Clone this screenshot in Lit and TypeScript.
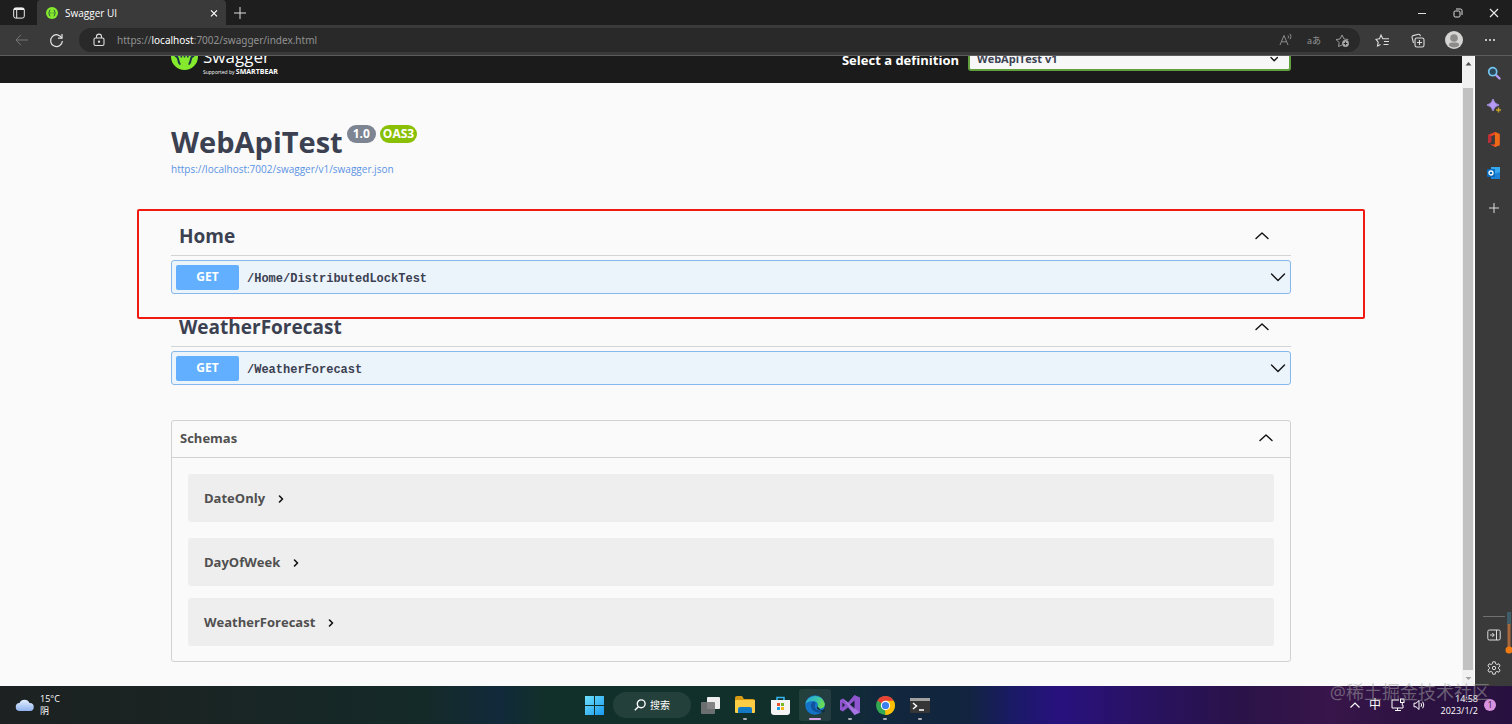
import { LitElement, html, css, svg } from "lit";
import { customElement, property } from "lit/decorators.js";

const chevron = (d: string, w = 1.4) => svg`<path d=${d} fill="none" stroke="#111" stroke-width=${w} stroke-linecap="round" stroke-linejoin="round"/>`;
const UP = "M2 9.500 L8 4 L14 9.500";
const DOWN = "M1.5 5 L8 11.5 L14.5 5";

const resets = css`
  * { box-sizing: border-box; }
  button, input, select { font: inherit; color: inherit; margin: 0; padding: 0; border: 0; background: none; }
  button { display: flex; align-items: center; justify-content: center; }
  h1, h2, h3, p { margin: 0; }
  svg { display: block; flex: none; }
`;

@customElement("browser-chrome")
export class BrowserChrome extends LitElement {
  static styles = [resets, css`
    :host { display: block; color: #e8e8e8; font-size: 10px; }
    .tabs { display: flex; height: 25px; background: #1e1e1e; }
    .workspace { width: 37px; }
    .tab { display: flex; align-items: center; width: 189px; padding: 0 6px 0 9px; background: #3a3a3a; border-radius: 4px 4px 0 0; color: #fff; }
    .tab span { flex: 1; margin-left: 7px; }
    .plus { width: 28px; }
    .window { display: flex; margin-left: auto; }
    .window button { width: 36px; }
    .tools { display: flex; align-items: center; height: 31px; background: #3a3a3a; border-bottom: 1px solid #5c5c5c; padding-right: 4px; }
    .nav { width: 35px; height: 30px; }
    .nav.back { margin-left: 4px; }
    .address { display: flex; flex: 1; align-items: center; height: 24px; margin: 0 4px 0 5px; padding: 0 4px 0 14px; border-radius: 12px; background: #292929; }
    .url { flex: 1; margin-left: 12px; font-family: "Noto Sans", sans-serif; font-size: 10px; line-height: 14px; color: #929292; text-decoration: none; }
    .url b { font-weight: 400; color: #fff; }
    .address button { width: 28px; height: 24px; color: #999; font-size: 9px; }
    .tools > .side { width: 36px; height: 30px; }
  `];
  render() {
    return html`
      <div class="tabs">
        <button class="workspace" aria-label="Workspaces"><svg width="12" height="12" viewBox="0 0 12 12" fill="none" stroke="#eee" stroke-width="1"><rect x=".7" y=".9" width="10.6" height="10.2" rx="2"/><path d="M1 2h10" stroke-width="2"/><path d="M3.7 3v8"/></svg></button>
        <div class="tab">
          <svg width="12" height="12" viewBox="0 0 12 12"><circle cx="6" cy="6" r="6" fill="#85ea2d"/><path d="M4.3 3C3 3 3.8 5.5 2.5 6 3.800 6.500 3 9 4.300 9M7.700 3C9 3 8.200 5.500 9.500 6 8.200 6.500 9 9 7.700 9M4.500 6h.8M6.700 6h.8" fill="none" stroke="#173647" stroke-width=".9"/></svg>
          <span>Swagger UI</span>
          <button aria-label="Close tab"><svg width="12" height="12" viewBox="0 0 12 12"><path d="M3 3.300l6 6M9 3.300l-6 6" stroke="#fff" stroke-width="1.200"/></svg></button>
        </div>
        <button class="plus" aria-label="New tab"><svg width="12" height="12" viewBox="0 0 12 12"><path d="M6 0v12M0 6h12" stroke="#ddd"/></svg></button>
        <div class="window">
          <button aria-label="Minimize"><svg width="10" height="10" viewBox="0 0 10 10"><path d="M1 5.500h8" stroke="#ddd"/></svg></button>
          <button aria-label="Restore"><svg width="10" height="10" viewBox="0 0 10 10" fill="none" stroke="#ddd"><rect x="1" y="3" width="6" height="6" rx="1.200"/><path d="M3 1h4.500q1.500 0 1.500 1.500V7"/></svg></button>
          <button aria-label="Close"><svg width="10" height="10" viewBox="0 0 10 10"><path d="M1 1l8 8M9 1l-8 8" stroke="#eee" stroke-width="1.100"/></svg></button>
        </div>
      </div>
      <div class="tools">
        <button class="nav back" aria-label="Back"><svg width="14" height="12" viewBox="0 0 14 12" fill="none" stroke="#777"><path d="M13 6H1M6 .8L1 6l5 5.200"/></svg></button>
        <button class="nav" aria-label="Refresh"><svg width="15" height="15" viewBox="0 0 15 15" fill="none" stroke="#e6e6e6" stroke-width="1.200"><path d="M12.800 5A5.900 5.900 0 1 0 13.400 8"/><path d="M13 1v4.200H9"/></svg></button>
        <div class="address">
          <svg width="12" height="14" viewBox="0 0 12 14" fill="none" stroke="#ddd" stroke-width="1.100"><rect x="1" y="5" width="10" height="7.500" rx="1.500"/><path d="M3.500 5V3.600a2.500 2.500 0 0 1 5 0V5"/><circle cx="6" cy="8.700" r=".6" fill="#ddd"/></svg>
          <a class="url" href="#">https://<b>localhost</b>:7002/swagger/index.html</a>
          <button aria-label="Read aloud"><svg width="14" height="14" viewBox="0 0 14 14" fill="none" stroke="#8d8d8d"><path d="M1 12L5 2.500 9 12M2.500 8.800h5M9 2.500q1.200 1.200 0 2.800M11 .8q2 2.600 0 5.400"/></svg></button>
          <button aria-label="Translate">aあ</button>
          <button aria-label="Add favourite"><svg width="15" height="15" viewBox="0 0 15 15" fill="none" stroke="#999"><path d="M7 12l-3.500 1.500.7-4L1 6.500l4-.5L7 2l2 4 4 .5-1 1"/><circle cx="10.500" cy="10.500" r="3.400" fill="#aaa" stroke="none"/><path d="M8.700 10.500h3.600M10.500 8.700v3.600" stroke="#292929"/></svg></button>
        </div>
        <button class="side" aria-label="Favourites"><svg width="15" height="15" viewBox="0 0 15 15" fill="none" stroke="#ddd" stroke-width="1.100"><path d="M5.500 11.500L2.500 13l.7-3.800L1 6.300l3.500-.6L6 2l1.800 3.700H14M9 8.500h5M8.500 11.500h5"/></svg></button>
        <button class="side" aria-label="Collections"><svg width="15" height="15" viewBox="0 0 15 15" fill="none" stroke="#ddd" stroke-width="1.100"><rect x="4" y="5" width="9" height="9" rx="1.800"/><path d="M8.500 7v5M6 9.500h5M2.500 10L1 4.500Q.8 3 2 2.600L7.500 1.200q1.500-.2 2 2"/></svg></button>
        <button class="side" aria-label="Profile"><svg width="18" height="18" viewBox="0 0 18 18"><circle cx="9" cy="9" r="9" fill="#d6d4d2"/><circle cx="9" cy="7" r="3.800" fill="#8d8b8a"/><path d="M3.800 14.500q0-3 3-3h4.400q3 0 3 3a8 8 0 0 1-10.400 0z" fill="#8d8b8a"/></svg></button>
        <button class="side" aria-label="Settings and more"><svg width="12" height="4" viewBox="0 0 12 4" fill="#eee"><circle cx="2" cy="2" r="1"/><circle cx="6" cy="2" r="1"/><circle cx="10" cy="2" r="1"/></svg></button>
      </div>`;
  }
}

@customElement("api-section")
export class ApiSection extends LitElement {
  @property() name = "";
  @property() path = "";
  @property({ type: Boolean }) marked = false;
  static styles = [resets, css`
    :host { display: block; position: relative; height: 91px; color: #3b4151; }
    .tag { display: flex; align-items: center; width: 100%; height: 41px; padding: 0 21px 0 8px; border-bottom: 1px solid #d3d4d6; justify-content: space-between; }
    h2 { font-size: 19px; line-height: 26px; padding-top: 2px; font-weight: 700; }
    .op { display: flex; align-items: center; width: 100%; height: 34px; margin-top: 4px; padding: 0 4px; border: 1px solid #85b8ec; border-radius: 3px; background: #ebf3fb; }
    .method { width: 63px; margin-right: 8px; border-radius: 2px; background: #61affe; color: #fff; font-size: 12px; line-height: 24px; padding-bottom: 1px; font-weight: 700; }
    .path { flex: 1; text-align: left; padding-top: 4px; font: 700 12px/16px "Liberation Mono", monospace; }
    .mark { position: absolute; inset: -6px -74px -13px -34px; border: 2px solid #f01a12; border-radius: 2px; pointer-events: none; z-index: 2; }
  `];
  render() {
    return html`
      <button class="tag"><h2>${this.name}</h2><svg width="16" height="13" viewBox="0 0 16 13">${chevron(UP)}</svg></button>
      <button class="op"><span class="method">GET</span><span class="path">${this.path}</span><svg width="16" height="16" viewBox="0 0 16 16">${chevron(DOWN)}</svg></button>
      ${this.marked ? html`<div class="mark"></div>` : ""}`;
  }
}

@customElement("swagger-page")
export class SwaggerPage extends LitElement {
  static styles = [resets, css`
    :host { display: flex; flex: 1; min-width: 0; overflow: hidden; background: #fafafa; color: #3b4151; }
    .page { flex: 1; min-width: 0; }
    .wrap { max-width: 1120px; margin: 0 auto; }
    .topbar { height: 46px; margin-top: -19px; background: #1b1b1b; color: #fff; }
    .topbar .wrap { display: flex; align-items: flex-start; height: 100%; }
    .logo { display: flex; gap: 5px; margin-top: 6px; }
    .brand { display: flex; flex-direction: column; padding-top: 3px; }
    .word { font-size: 17px; line-height: 22px; }
    .by { font-size: 5px; line-height: 7px; }
    .by b { font-size: 7px; }
    .def { display: flex; align-items: flex-start; margin-left: auto; margin-top: 10px; gap: 9px; font-size: 13px; font-weight: 700; }
    .def label { line-height: 24px; padding-top: 1px; }
    .pick { display: flex; align-items: center; position: relative; }
    select { appearance: none; width: 323px; height: 24px; padding: 0 7px 2px; border: 2px solid #62a03f; border-radius: 3px; background: #f7f7f7; color: #3b4151; font-size: 11px; }
    .pick svg { position: absolute; right: 12px; top: 8px; }
    .info { padding: 38px 0 39px; }
    .title { display: flex; align-items: flex-start; gap: 4px; }
    h1 { font-size: 29px; line-height: 41px; font-weight: 700; }
    .pill { margin-top: 4px; padding: 0 6px; border-radius: 9px; background: #7d8492; color: #fff; font-size: 12px; line-height: 18px; font-weight: 700; }
    .oas { background: #89bf04; padding: 0 3px; }
    .json { display: block; color: #5a93e4; font-size: 10px; line-height: 14px; text-decoration: none; }
    .models { margin-top: 23px; border: 1px solid #d0d1d3; border-radius: 3px; color: #505050; padding-bottom: 15px; }
    .head { display: flex; justify-content: space-between; width: 100%; height: 37px; padding: 0 16px 3px 8px; border-bottom: 1px solid #d0d1d3; }
    h3 { font-size: 13px; line-height: 18px; font-weight: 700; }
    .model { display: flex; align-items: center; height: 48px; margin: 16px 16px 0; padding-left: 16px; gap: 12px; background: #eeeeee; border-radius: 3px; font-size: 13px; font-weight: 700; }
    .model:last-child { margin-top: 12px; }
    .scroll { display: flex; flex-direction: column; align-items: center; width: 13px; background: #f1f1f1; border-right: 1px solid #fff; }
    .arrow { height: 16px; width: 13px; }
    .track { flex: 1; width: 10px; padding-top: 16px; display: flex; }
    .thumb { flex: 1; background: #c1c1c1; }
  `];
  render() {
    return html`
      <main class="page">
        <div class="topbar"><div class="wrap">
          <div class="logo">
            <svg width="27" height="27" viewBox="0 0 27 27"><circle cx="13.500" cy="13.500" r="13.500" fill="#85ea2d"/><path d="M9.500 6C6.500 6 8.500 12 5.500 13.500 8.500 15 6.500 21 9.500 21M17.500 6C20.500 6 18.500 12 21.500 13.500 18.500 15 20.500 21 17.500 21" fill="none" stroke="#173647" stroke-width="2"/><path d="M9.500 13.500h1.600M12.700 13.500h1.600M16 13.500h1.600" stroke="#173647" stroke-width="2"/></svg>
            <div class="brand"><span class="word">Swagger</span><span class="by">Supported by <b>SMARTBEAR</b></span></div>
          </div>
          <div class="def"><label for="definition">Select a definition</label>
            <div class="pick"><select id="definition"><option>WebApiTest v1</option></select><svg width="10" height="8" viewBox="0 0 10 8">${chevron("M2 2.500l3.200 3.200L8.400 2.500")}</svg></div>
          </div>
        </div></div>
        <div class="wrap">
          <div class="info">
            <div class="title"><h1>WebApiTest</h1><span class="pill">1.0</span><span class="pill oas">OAS3</span></div>
            <a class="json" href="#">https://localhost:7002/swagger/v1/swagger.json</a>
          </div>
          <api-section name="Home" path="/Home/DistributedLockTest" marked></api-section>
          <api-section name="WeatherForecast" path="/WeatherForecast"></api-section>
          <section class="models">
            <button class="head"><h3>Schemas</h3><svg width="16" height="13" viewBox="0 0 16 13">${chevron(UP)}</svg></button>
            ${["DateOnly", "DayOfWeek", "WeatherForecast"].map(n => html`<div class="model">${n}<svg width="8" height="10" viewBox="0 0 8 10">${chevron("M2.500 3L5.500 6 2.500 9", 1.6)}</svg></div>`)}
          </section>
        </div>
      </main>
      <div class="scroll">
        <svg class="arrow" viewBox="0 0 13 16"><path d="M3.500 9.500L6.500 6l3 3.500z" fill="#505050"/></svg>
        <div class="track"><div class="thumb"></div></div>
        <svg class="arrow" viewBox="0 0 13 16"><path d="M3.500 7L6.500 10l3-3z" fill="#a0a0a0"/></svg>
      </div>`;
  }
}

@customElement("edge-sidebar")
export class EdgeSidebar extends LitElement {
  static styles = [resets, css`
    :host { display: flex; flex-direction: column; align-items: center; position: relative; width: 37px; padding: 10px 0 11px; background: #3a3a3a; }
    .top { display: flex; flex-direction: column; gap: 19px; }
    .plus { margin-top: 23px; }
    .bottom { display: flex; flex-direction: column; align-items: center; gap: 19px; margin-top: auto; padding-top: 11px; border-top: 1px solid #707070; width: 22px; }
    .gauge { position: absolute; right: 0; bottom: 32px; }
  `];
  render() {
    return html`
      <div class="top">
        <button aria-label="Search"><svg width="14" height="14" viewBox="0 0 14 14"><path d="M8.500 8.500l4 4" stroke="#b69af0" stroke-width="2.400" stroke-linecap="round"/><circle cx="5.700" cy="5.700" r="4" fill="#2c4858" stroke="#72c4ef" stroke-width="1.700"/></svg></button>
        <button aria-label="Discover"><svg width="14" height="14" viewBox="0 0 14 14"><path d="M6 0q1 5 6 6-5 1-6 6-1-5-6-6 5-1 6-6z" fill="#b59bf5" stroke="#b59bf5" stroke-width=".8"/><path d="M11.500 8.500v5M9 11h5" stroke="#c6a229" stroke-width="1.400"/></svg></button>
        <button aria-label="Office"><svg width="14" height="15" viewBox="0 0 14 16"><path d="M8 0L1 3v9l3-1.500V4.500L8 3v10l-5 .2L8 16l5-2V2z" fill="#e94425"/><path d="M8 0l5 2v12l-5 2z" fill="#ef6a17"/><path d="M1 3l3 1v6.500L1 12z" fill="#c02b3b"/></svg></button>
        <button aria-label="Outlook"><svg width="14" height="14" viewBox="0 0 14 14"><path d="M4 1h9v11H4z" fill="#35a7ee"/><path d="M13 6v7H4V9z" fill="#1c82d8"/><rect y="3" width="8" height="8" rx="1" fill="#0869ba"/><circle cx="4" cy="7" r="2" fill="none" stroke="#fff" stroke-width="1.300"/></svg></button>
      </div>
      <button class="plus" aria-label="Customize"><svg width="10" height="10" viewBox="0 0 10 10"><path d="M5 0v10M0 5h10" stroke="#ddd"/></svg></button>
      <div class="bottom">
        <button aria-label="Hide sidebar"><svg width="14" height="14" viewBox="0 0 14 14" fill="none" stroke="#ddd"><rect x=".8" y="2" width="12.400" height="10" rx="1.500"/><path d="M9.500 2v10M3 7h4M5.300 5L7.300 7 5.300 9"/></svg></button>
        <button aria-label="Settings"><svg width="14" height="14" viewBox="0 0 14 14" fill="none" stroke="#ddd" stroke-linejoin="round"><path d="M5.800.8h2.400l.4 2 1.300.7 2-.7 1.200 2.100L11.600 6.300v1.400l1.500 1.400-1.200 2.100-2-.7-1.300.7-.4 2H5.800l-.4-2-1.300-.7-2 .7L.9 9.100l1.500-1.400V6.300L.9 4.900l1.200-2.100 2 .7 1.300-.7z"/><circle cx="7" cy="7" r="1.700"/></svg></button>
      </div>
      <svg class="gauge" width="7" height="42" viewBox="0 0 7 42"><path d="M4 0v13" stroke="#3f5c69" stroke-width="4"/><path d="M4 12v28" stroke="#a9683c" stroke-width="3"/><circle cx="4" cy="38" r="3.500" fill="#f07c12"/></svg>`;
  }
}

@customElement("task-bar")
export class TaskBar extends LitElement {
  static styles = [resets, css`
    :host { display: grid; grid-template-columns: 1fr auto 1fr; align-items: center; position: relative; height: 38px; padding: 0 16px 0 15px; color: #fff; font-size: 9px; line-height: 12px; background: linear-gradient(90deg, #1d2122 0%, #1a2423 12%, #142a28 28%, #11293a 33%, #12302a 36%, #12302b 53%, #11283c 58%, #12243f 64%, #1a1a66 67%, #28117e 70%, #291260 76%, #2a1348 82%, #38154a 88%, #2b1240 94%, #281140 100%); }
    .weather { display: flex; align-items: center; gap: 5px; justify-self: start; text-align: left; }
    .apps { display: flex; align-items: center; gap: 3px; padding-left: 3px; }
    .app { position: relative; width: 32px; height: 32px; border-radius: 3px; }
    .app.on { background: #ffffff14; }
    .run::after { content: ""; position: absolute; bottom: 1px; width: 4px; height: 2px; border-radius: 1px; background: #a9adb5; }
    .on::after { width: 12px; background: #d8a3e6; }
    .search { width: 78px; height: 26px; gap: 4px; border-radius: 13px; background: #24403a; font-size: 10px; }
    .tray { display: flex; align-items: center; justify-self: end; gap: 8px; }
    .clock { text-align: right; width: 44px; margin-right: -2px; }
    .lang { font-size: 12px; margin-right: 2px; }
    .badge { width: 12px; height: 12px; border-radius: 50%; background: #d893e0; color: #3f1c4f; text-align: center; }
    .credit { position: absolute; right: 22px; top: -6px; font-size: 18px; line-height: 24px; color: #a4a4a488; pointer-events: none; }
  `];
  render() {
    return html`
      <button class="weather"><svg width="20" height="14" viewBox="0 0 20 14"><defs><linearGradient id="cl" x2="0" y2="1"><stop stop-color="#e4efff"/><stop offset="1" stop-color="#8fb2ee"/></linearGradient></defs><path d="M5 13a4 4 0 0 1-.5-8A5.500 5.500 0 0 1 14.500 5 4 4 0 1 1 15 13z" fill="url(#cl)"/></svg><span>15°C<br>阴</span></button>
      <nav class="apps">
        <button class="app" aria-label="Start"><svg width="19" height="19" viewBox="0 0 19 19"><defs><linearGradient id="w" x2="1" y2="1"><stop stop-color="#6fe0fb"/><stop offset="1" stop-color="#1999ed"/></linearGradient></defs><path d="M0 0h9v9H0zM10 0h9v9h-9zM0 10h9v9H0zM10 10h9v9h-9z" fill="url(#w)"/></svg></button>
        <button class="search"><svg width="12" height="12" viewBox="0 0 12 12" fill="none" stroke="#fff" stroke-width="1.400"><circle cx="7.200" cy="4.800" r="3.900"/><path d="M4.300 7.700L.8 11.300"/></svg>搜索</button>
        <button class="app" aria-label="Task view"><svg width="19" height="17" viewBox="0 0 19 17"><rect x="6" width="13" height="12" rx="1" fill="#eee"/><rect y="5" width="14" height="12" rx="1" fill="#777" opacity=".9"/></svg></button>
        <button class="app run" aria-label="File Explorer"><svg width="20" height="18" viewBox="0 0 20 18"><path d="M0 2q0-2 2-2h5l2 3h9q2 0 2 2v4H0z" fill="#d99a16"/><rect y="4" width="20" height="13" rx="1" fill="#fdcc45"/><path d="M3 17v-4q0-2 2-2h10q2 0 2 2v4z" fill="#1479c4"/></svg></button>
        <button class="app" aria-label="Store"><svg width="19" height="19" viewBox="0 0 19 19"><path d="M6 5V1.500h7V5" fill="none" stroke="#32b4ec" stroke-width="1.600"/><path d="M0 4h19v12q0 3-3 3H3q-3 0-3-3z" fill="#f4f4f4"/><path d="M6 7h3v3H6z" fill="#e8512f"/><path d="M10 7h3v3h-3z" fill="#7ab62a"/><path d="M6 11h3v3H6z" fill="#1f9fe6"/><path d="M10 11h3v3h-3z" fill="#f5b91b"/></svg></button>
        <button class="app run on" aria-label="Edge"><svg width="20" height="20" viewBox="0 0 20 20"><defs><linearGradient id="e1" x2="1" y2=".3"><stop stop-color="#2ba8df"/><stop offset=".6" stop-color="#35c2b0"/><stop offset="1" stop-color="#68dc57"/></linearGradient></defs><circle cx="10" cy="10" r="9.800" fill="#1574c8"/><path d="M.3 9A10 10 0 0 1 19.800 8.500c.3 4-3 5.500-6 5-2-.3-2-1.200-1.300-2C14 9 11.500 6 8 6 4 6 1.500 7.500.3 9z" fill="url(#e1)"/><path d="M7 7.500c-3 5 1 10 8 10.200A10 10 0 0 0 18.600 14.500c-5 2.500-9 0-9-3.500 0-1.500.5-2.500 1-3Q9 6.500 7 7.500z" fill="#12509a"/><path d="M12.600 11.300q-2 3 2 4 3 .3 4.600-1.300l1 2-2.500 2" fill="#122f40"/></svg></button>
        <button class="app run" aria-label="Visual Studio"><svg width="20" height="20" viewBox="0 0 20 20"><path d="M14.500 0L20 2.500v15L14.500 20 8 12.500 3 16.500 0 15V5l3-1.500 5 4z" fill="#8f55cf"/><path d="M14.500 5.500v9L9.500 10zM2.500 7.500v5L5 10z" fill="#142039"/><path d="M3 3.500L14.500 20 20 17.500z" fill="#b58bea" opacity=".6"/></svg></button>
        <button class="app run" aria-label="Chrome"><svg width="19" height="19" viewBox="0 0 20 20"><circle cx="10" cy="10" r="10" fill="#32a852"/><path d="M10 10L1.340 5A10 10 0 0 1 18.660 5z" fill="#e94235"/><path d="M10 10V5h8.660A10 10 0 0 1 10 20z" fill="#fbbd05"/><path d="M10 20l4.300-7.500L10 10z" fill="#fbbd05"/><circle cx="10" cy="10" r="4.900" fill="#fff"/><circle cx="10" cy="10" r="3.800" fill="#3c7fee"/></svg></button>
        <button class="app run" aria-label="Terminal"><svg width="20" height="15" viewBox="0 0 20 15"><rect width="20" height="15" rx="1" fill="#363636"/><path d="M0 0h20v3H0z" fill="#a2a2a2"/><path d="M3 5l3.500 3L3 11M9 12h5" fill="none" stroke="#fff" stroke-width="1.500"/></svg></button>
      </nav>
      <div class="tray">
        <button aria-label="Hidden icons"><svg width="12" height="8" viewBox="0 0 12 8"><path d="M1.500 6.500L6 2l4.500 4.500" fill="none" stroke="#fff" stroke-width="1.200"/></svg></button>
        <span class="lang">中</span>
        <svg width="14" height="14" viewBox="0 0 14 14" fill="none" stroke="#fff"><path d="M8 2H1v8h11V7M4 12.500h6M6.500 10v2.500"/><rect x="9.500" y="1" width="3.500" height="3.500"/><path d="M11.300 4.500v3"/></svg>
        <svg width="13" height="12" viewBox="0 0 13 12" fill="none" stroke="#fff"><path d="M1 4.200h2L6 1.500v9L3 7.800H1zM8 4.200q1.200 1.800 0 3.600M9.700 2.700q2.200 3.300 0 6.600"/></svg>
        <div class="clock">14:58<br>2023/1/2</div>
        <span class="badge">1</span>
      </div>
      <span class="credit">@稀土掘金技术社区</span>`;
  }
}

@customElement("app-root")
export class AppRoot extends LitElement {
  static styles = css`
    :host { display: flex; flex-direction: column; height: 100vh; overflow: hidden; font-family: "Open Sans", "Noto Sans", "Noto Sans CJK SC", sans-serif; }
    .middle { display: flex; flex: 1; min-height: 0; }
  `;
  render() {
    return html`<browser-chrome></browser-chrome>
      <div class="middle"><swagger-page></swagger-page><edge-sidebar></edge-sidebar></div>
      <task-bar></task-bar>`;
  }
}
